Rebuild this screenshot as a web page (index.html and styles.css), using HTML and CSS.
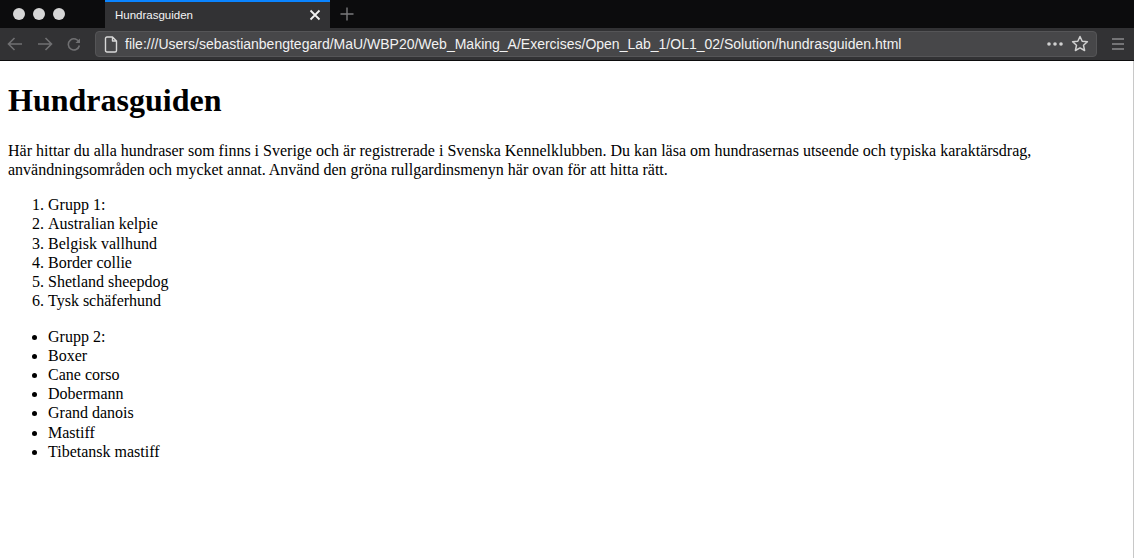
FILE: index.html
```html
<!DOCTYPE html>
<html lang="sv">
<head>
<meta charset="utf-8">
<title>Hundrasguiden</title>
<link rel="stylesheet" href="styles.css">
</head>
<body>
<div class="window">
  <div class="tabbar">
    <div class="lights"><span class="light"></span><span class="light"></span><span class="light"></span></div>
    <div class="tab">
      <span class="tab-title">Hundrasguiden</span>
      <svg class="tab-close" width="12" height="12" viewBox="0 0 12 12"><path d="M1.5 1.5 L10.5 10.5 M10.5 1.5 L1.5 10.5" stroke="#f2f2f2" stroke-width="1.8" fill="none"/></svg>
    </div>
    <svg class="newtab" width="14" height="14" viewBox="0 0 14 14"><path d="M7 0.5 V13.5 M0.5 7 H13.5" stroke="#7a7a7c" stroke-width="1.4" fill="none"/></svg>
  </div>
  <div class="toolbar">
    <div class="navs">
      <svg width="18" height="16" viewBox="0 0 18 16"><path d="M16 8 H2.5 M8.5 2 L2.5 8 L8.5 14" stroke="#707072" stroke-width="1.6" fill="none"/></svg>
      <svg width="18" height="16" viewBox="0 0 18 16"><path d="M2 8 H15.5 M9.5 2 L15.5 8 L9.5 14" stroke="#707072" stroke-width="1.6" fill="none"/></svg>
      <svg width="16" height="16" viewBox="0 0 16 16"><path d="M13.2 6.5 A5.6 5.6 0 1 0 13.4 9.5" stroke="#707072" stroke-width="1.6" fill="none"/><path d="M14 2.5 V7 H9.5 Z" fill="#707072"/></svg>
    </div>
    <div class="urlbar">
      <svg class="docicon" width="14" height="17" viewBox="0 0 14 17"><path d="M1.5 2.5 Q1.5 1 3 1 H8.5 L12.5 5 V14.5 Q12.5 16 11 16 H3 Q1.5 16 1.5 14.5 Z M8.5 1 V5 H12.5" stroke="#d8d8d8" stroke-width="1.4" fill="none" stroke-linejoin="round"/></svg>
      <span class="url">file:///Users/sebastianbengtegard/MaU/WBP20/Web_Making_A/Exercises/Open_Lab_1/OL1_02/Solution/hundrasguiden.html</span>
      <svg class="dots" width="16" height="4" viewBox="0 0 16 4"><circle cx="2" cy="2" r="1.8" fill="#d0d0d0"/><circle cx="8" cy="2" r="1.8" fill="#d0d0d0"/><circle cx="14" cy="2" r="1.8" fill="#d0d0d0"/></svg>
      <svg class="star" width="18" height="18" viewBox="0 0 18 18"><path d="M9 1.5 L11.2 6.3 L16.4 6.8 L12.5 10.3 L13.6 15.5 L9 12.9 L4.4 15.5 L5.5 10.3 L1.6 6.8 L6.8 6.3 Z" stroke="#d0d0d0" stroke-width="1.5" fill="none" stroke-linejoin="round"/></svg>
    </div>
    <svg class="menu" width="14" height="14" viewBox="0 0 14 14"><path d="M1 2 H13 M1 7 H13 M1 12 H13" stroke="#8a8a8c" stroke-width="1.4" fill="none"/></svg>
  </div>
  <div class="page">
    <h1>Hundrasguiden</h1>
    <p>Här hittar du alla hundraser som finns i Sverige och är registrerade i Svenska Kennelklubben. Du kan läsa om hundrasernas utseende och typiska karaktärsdrag, användningsområden och mycket annat. Använd den gröna rullgardinsmenyn här ovan för att hitta rätt.</p>
    <ol>
      <li>Grupp 1:</li>
      <li>Australian kelpie</li>
      <li>Belgisk vallhund</li>
      <li>Border collie</li>
      <li>Shetland sheepdog</li>
      <li>Tysk schäferhund</li>
    </ol>
    <ul>
      <li>Grupp 2:</li>
      <li>Boxer</li>
      <li>Cane corso</li>
      <li>Dobermann</li>
      <li>Grand danois</li>
      <li>Mastiff</li>
      <li>Tibetansk mastiff</li>
    </ul>
  </div>
</div>
</body>
</html>
```

FILE: styles.css
```css
html, body {
  margin: 0;
  padding: 0;
  background: #ffffff;
}
.window {
  width: 1134px;
  height: 558px;
  display: flex;
  flex-direction: column;
  overflow: hidden;
}
.tabbar {
  height: 28px;
  background: #0c0c0d;
  display: flex;
  align-items: stretch;
  flex-shrink: 0;
}
.lights {
  display: flex;
  align-items: center;
  gap: 8px;
  padding-left: 13px;
  width: 92px;
}
.light {
  width: 12px;
  height: 12px;
  border-radius: 50%;
  background: #d6d6d6;
}
.tab {
  width: 225px;
  background: #323234;
  border-top: 2px solid #0a84ff;
  box-sizing: border-box;
  display: flex;
  align-items: center;
  padding: 0 9px 0 10px;
}
.tab-title {
  flex: 1;
  font-family: "Liberation Sans", Arial, sans-serif;
  font-size: 11.5px;
  color: #f4f4f4;
}
.newtab {
  align-self: center;
  margin-left: 10px;
}
.toolbar {
  height: 32px;
  background: #323234;
  border-bottom: 1px solid #0c0c0d;
  display: flex;
  align-items: center;
  flex-shrink: 0;
}
.navs {
  display: flex;
  align-items: center;
  gap: 12px;
  padding-left: 6px;
  width: 89px;
}
.urlbar {
  width: 1002px;
  height: 26px;
  box-sizing: border-box;
  background: #474749;
  border: 1px solid #555557;
  border-radius: 4px;
  display: flex;
  align-items: center;
  padding: 0 6px 0 8px;
}
.docicon {
  margin-right: 7px;
}
.url {
  flex: 1;
  font-family: "Liberation Sans", Arial, sans-serif;
  font-size: 14px;
  color: #f2f2f2;
  white-space: nowrap;
}
.dots {
  margin-right: 8px;
}
.star {
  margin-right: 1px;
}
.menu {
  margin-left: 14px;
}
.page {
  flex: 1;
  padding: 0 8px;
  border-right: 1px solid #c8c8c8;
  font-family: "Liberation Serif", "Times New Roman", serif;
  font-size: 16px;
  line-height: 19.2px;
  color: #000;
  overflow: hidden;
}
.page h1 {
  font-size: 32px;
  line-height: 37px;
  margin: 21.44px 0;
}
.page p {
  margin: 16px 0;
}
.page ol, .page ul {
  margin: 16px 0;
  padding-left: 40px;
}
```
